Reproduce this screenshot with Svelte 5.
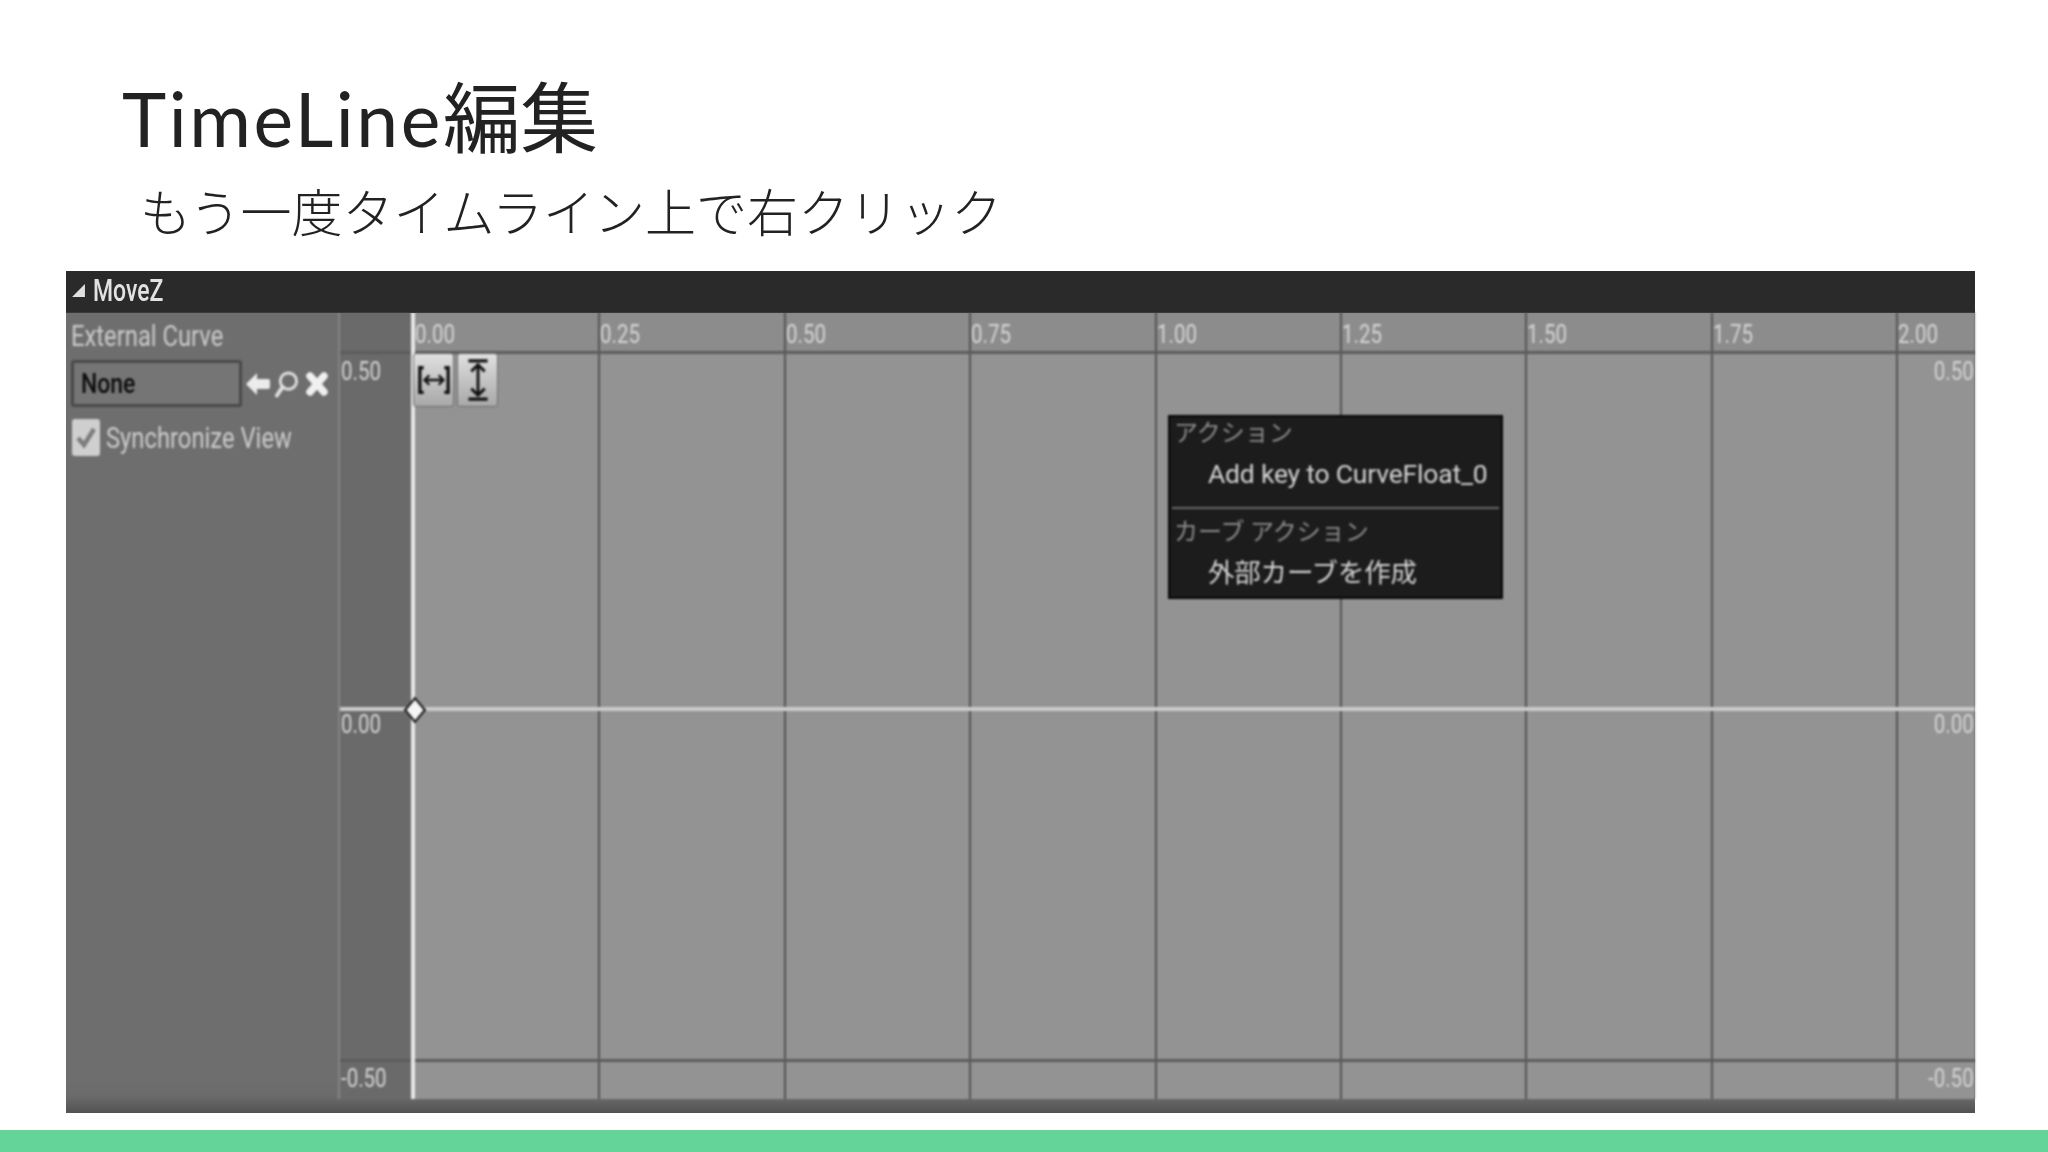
<script>
  const ticks = ['0.00', '0.25', '0.50', '0.75', '1.00', '1.25', '1.50', '1.75', '2.00'];
  // pixels between two 0.25 steps on the track
  const step = 185.4;
</script>

<main class="slide">
  <h1 class="title">TimeLine<span class="title-cjk">編集</span></h1>
  <p class="subtitle">もう一度タイムライン上で右クリック</p>

  <section class="panel">
    <header class="panel-head">
      <svg class="caret" viewBox="0 0 14 14" width="15" height="15"><path d="M13 1V13H1Z" fill="#e0e0e0" /></svg>
      <span class="narrow head-name">MoveZ</span>
    </header>

    <div class="panel-body">
      <aside class="side">
        <div class="side-label"><span class="narrow">External Curve</span></div>
        <div class="curve-row">
          <div class="curve-input"><span class="narrow">None</span></div>
          <svg class="tool" viewBox="0 0 26 24" width="26" height="26">
            <path d="M1 12 12 1V7H23Q25 7 25 9V15Q25 17 23 17H12V23Z" fill="#ececec" />
          </svg>
          <svg class="tool" viewBox="0 0 26 28" width="25" height="28">
            <circle cx="15" cy="11" r="8.5" fill="none" stroke="#e0e0e0" stroke-width="3" />
            <path d="M9 17 3 26" stroke="#e0e0e0" stroke-width="4" stroke-linecap="round" />
          </svg>
          <svg class="tool cross" viewBox="0 0 24 24" width="24" height="26">
            <path d="M5 4 19 20M19 4 5 20" stroke="#f0f0f0" stroke-width="7.5" stroke-linecap="round" />
          </svg>
        </div>
        <div class="sync-row">
          <div class="check">
            <svg viewBox="0 0 28 36" width="28" height="36">
              <path d="M6 19 12 26 22 10" fill="none" stroke="#7d7d7d" stroke-width="4.5" />
            </svg>
          </div>
          <span class="side-label narrow">Synchronize View</span>
        </div>
      </aside>

      <div class="timeline">
        <div class="key-col"></div>
        <div class="track">
          <div class="white-line"></div>
          {#each ticks as tick, i}
            <div class="v-line" style="left: {i * step}px"></div>
            <span class="tick narrow" style="left: {i * step + 2}px">{tick}</span>
          {/each}
          <div class="tool-buttons">
            <button class="fit-btn" aria-label="Fit horizontal">
              <svg viewBox="0 0 38 36" width="36" height="34">
                <path d="M8 5H4V31H8M30 5H34V31H30" fill="none" stroke="#111" stroke-width="3.5" />
                <path d="M9 18H29M14 13 9 18 14 23M24 13 29 18 24 23" fill="none" stroke="#111" stroke-width="2.5" />
              </svg>
            </button>
            <button class="fit-btn" aria-label="Fit vertical">
              <svg viewBox="0 0 30 48" width="30" height="46">
                <path d="M5 4H25M5 44H25" stroke="#111" stroke-width="3.5" />
                <path d="M15 8V40M8 15 15 8 22 15M8 33 15 40 22 33" fill="none" stroke="#111" stroke-width="3" />
              </svg>
            </button>
          </div>
          <div class="menu">
            <div class="menu-head">アクション</div>
            <div class="menu-item">Add key to CurveFloat_0</div>
            <div class="menu-sep"></div>
            <div class="menu-head">カーブ アクション</div>
            <div class="menu-item">外部カーブを作成</div>
          </div>
        </div>
        <div class="h-line top"></div>
        <div class="h-line bottom"></div>
        <div class="mid-line"></div>
        <div class="diamond"></div>
        <span class="val left v-top narrow">0.50</span>
        <span class="val left v-mid narrow">0.00</span>
        <span class="val left v-low narrow">-0.50</span>
        <span class="val right v-top narrow">0.50</span>
        <span class="val right v-mid narrow">0.00</span>
        <span class="val right v-low narrow">-0.50</span>
      </div>
    </div>
  </section>

  <footer class="accent"></footer>
</main>

<style>
  :global(body) {
    margin: 0;
    background: #fff;
  }

  .slide {
    height: 1152px;
    display: flex;
    flex-direction: column;
    overflow: hidden;
  }

  .title {
    margin: 70px 0 0 122px;
    height: 96px;
    font: 400 75px/96px Lato, "Noto Sans CJK JP", sans-serif;
    letter-spacing: 2.6px;
    color: #222;
  }

  .title-cjk {
    font-size: 77.5px;
    letter-spacing: 0;
  }

  .subtitle {
    margin: 14px 0 0 140px;
    height: 66px;
    font: 300 51px/60px "Noto Sans CJK JP", sans-serif;
    color: #222;
  }

  .panel {
    margin: 25px 73px 0 66px;
    height: 842px;
    display: flex;
    flex-direction: column;
    background: linear-gradient(#6e6e6e 96%, #6b6b6b 98%, #525252);
    font-family: Roboto, sans-serif;
  }

  /* the screenshot's UI font is much narrower than Roboto */
  .narrow {
    display: inline-block;
    transform: scaleX(0.82);
    transform-origin: 0 50%;
    white-space: nowrap;
  }

  .panel-head {
    height: 41px;
    flex: none;
    position: relative;
    z-index: 1;
    display: flex;
    align-items: center;
    gap: 5px;
    padding: 0 0 3px 5px;
    box-sizing: border-box;
    background: #2a2a2a;
    box-shadow: 0 1px 0 #3a3a3a;
    color: #e2e2e2;
    font-size: 31px;
  }

  .head-name {
    margin-left: 2px;
    font-weight: 500;
    transform: scaleX(0.74);
    filter: blur(0.6px);
  }

  .panel-body {
    flex: 1;
    display: flex;
    min-height: 0;
    filter: blur(0.8px);
  }

  .side {
    width: 272px;
    flex: none;
    padding: 6px 0 0 5px;
    box-sizing: border-box;
  }

  .side-label {
    color: #cbcbcb;
    font-size: 29px;
    line-height: 36px;
  }

  .curve-row {
    margin-top: 6px;
    display: flex;
    align-items: center;
    gap: 3px;
  }

  .curve-input {
    width: 171px;
    height: 47px;
    box-sizing: border-box;
    padding-left: 7px;
    border: 3px solid #4a4a4a;
    border-radius: 3px;
    background: #757575;
    color: #0c0c0c;
    font-size: 28px;
    font-weight: 500;
    line-height: 41px;
  }

  .tool {
    flex: none;
  }

  .cross {
    margin-left: 3px;
  }

  .sync-row {
    margin-top: 12px;
    margin-left: 1px;
    display: flex;
    align-items: center;
    gap: 6px;
  }

  .check {
    width: 28px;
    height: 37px;
    border-radius: 3px;
    background: #cfcfcf;
  }

  .timeline {
    flex: 1;
    position: relative;
    display: flex;
    margin-bottom: 14px;
    background: #6a6a6a;
    border-left: 2px solid #858585;
  }

  .key-col {
    width: 73px;
    flex: none;
  }

  .track {
    flex: 1;
    position: relative;
    background: linear-gradient(#8c8c8c 40px, #939393 40px);
  }

  .white-line {
    position: absolute;
    left: -2px;
    top: 0;
    bottom: 0;
    width: 4px;
    background: #e8e8e8;
    z-index: 1;
  }

  .v-line {
    position: absolute;
    top: 0;
    bottom: 0;
    width: 2px;
    background: #545454;
  }

  .tick {
    position: absolute;
    top: 8px;
    color: #d6d6d6;
    font-size: 25px;
    line-height: 30px;
  }

  .tool-buttons {
    position: absolute;
    left: 0;
    top: 41px;
    display: flex;
    gap: 3px;
    z-index: 2;
  }

  .fit-btn {
    width: 41px;
    height: 54px;
    padding: 0;
    display: grid;
    place-items: center;
    border: 1px solid #6c6c6c;
    border-radius: 3px;
    background: linear-gradient(#e0e0e0, #a8a8a8);
  }

  .menu {
    position: absolute;
    left: 755px;
    top: 103px;
    width: 335px;
    height: 184px;
    box-sizing: border-box;
    border: 2px solid #050505;
    background: #1c1c1c;
    z-index: 3;
    font-family: Roboto, "Noto Sans CJK JP", sans-serif;
    color: #d4d4d4;
  }

  .menu-head {
    height: 28px;
    padding-left: 4px;
    color: #8c8c8c;
    font-size: 24px;
    line-height: 28px;
    font-family: "Noto Sans CJK JP", sans-serif;
  }

  .menu-item {
    height: 62px;
    padding-left: 38px;
    font-size: 26.5px;
    line-height: 58px;
    letter-spacing: -0.2px;
    white-space: nowrap;
  }

  .menu-sep {
    height: 2px;
    margin: 0 2px 7px;
    background: #6a6a6a;
  }

  .h-line {
    position: absolute;
    left: 0;
    right: 0;
    height: 3px;
    background: #5c5c5c;
  }

  .h-line.top {
    top: 39px;
  }

  .h-line.bottom {
    top: 747px;
  }

  .mid-line {
    position: absolute;
    left: 0;
    right: 0;
    top: 395px;
    height: 4px;
    background: #cbcbcb;
  }

  .diamond {
    position: absolute;
    left: 67px;
    top: 390px;
    width: 16px;
    height: 16px;
    box-sizing: border-box;
    transform: scaleY(1.2) rotate(45deg);
    border: 2px solid #151515;
    background: #f5f5f5;
    z-index: 2;
  }

  .val {
    position: absolute;
    color: #d4d4d4;
    font-size: 25px;
    line-height: 30px;
  }

  .val.left {
    left: 1px;
  }

  .val.right {
    right: 1px;
    z-index: 1;
    transform-origin: 100% 50%;
  }

  .v-top {
    top: 45px;
  }

  .v-mid {
    top: 398px;
  }

  .v-low {
    top: 752px;
  }

  .accent {
    height: 22px;
    margin-top: auto;
    background: #64d498;
  }
</style>
